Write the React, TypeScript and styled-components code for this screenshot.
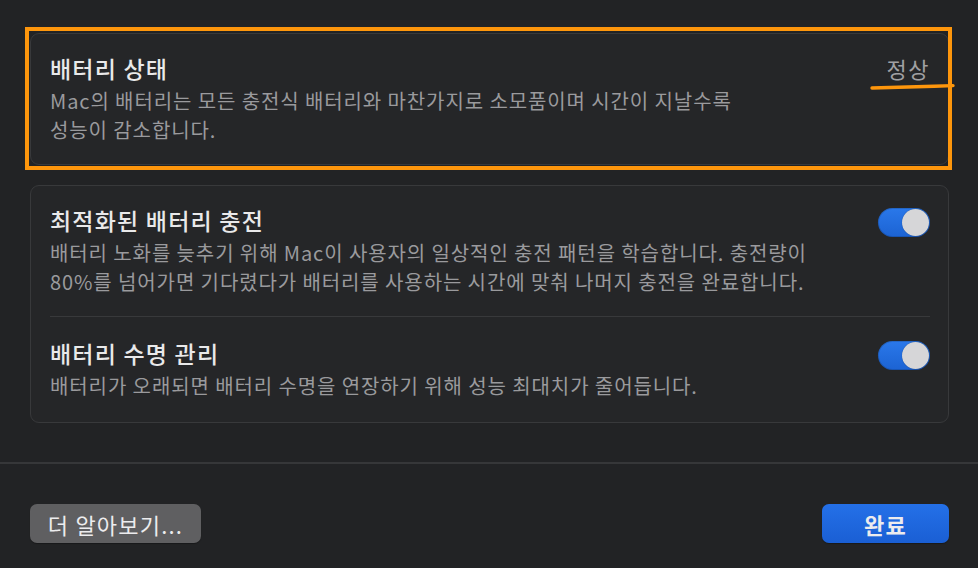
import React from "react";
import styled, { createGlobalStyle } from "styled-components";

const GlobalStyle = createGlobalStyle`
  html, body {
    margin: 0;
    padding: 0;
    background: #222325;
  }
  body {
    font-family: "Noto Sans CJK KR", "Noto Sans", sans-serif;
    -webkit-font-smoothing: antialiased;
  }
`;

const Page = styled.div`
  width: 978px;
  height: 568px;
  display: flex;
  flex-direction: column;
  box-sizing: border-box;
  padding-top: 33px;
  background: #222325;
  overflow: hidden;
`;

const Content = styled.div`
  display: flex;
  flex-direction: column;
  gap: 20px;
  padding: 0 29px 0 30px;
`;

const Annotated = styled.div`
  position: relative;
`;

const Frame = styled.div`
  position: absolute;
  left: -5px;
  top: -6px;
  right: -3px;
  bottom: -5px;
  border: 4px solid #fe960c;
  pointer-events: none;
`;

const Scribble = styled.svg`
  position: absolute;
  left: 840px;
  top: 48px;
  overflow: visible;
  pointer-events: none;
`;

const Card = styled.section`
  background: #252628;
  border: 1px solid #38393b;
  border-radius: 9px;
  padding: 0 18px 0 19px;
`;

const Row = styled.div<{ $divided?: boolean }>`
  display: flex;
  justify-content: space-between;
  align-items: flex-start;
  padding: ${(p) => (p.$divided ? "20px 0 21px" : "18px 0 20px")};
  border-top: ${(p) => (p.$divided ? "1px solid #38393b" : "none")};
`;

const Texts = styled.div`
  display: flex;
  flex-direction: column;
`;

const Title = styled.div`
  font-size: 23px;
  font-weight: 500;
  line-height: 32px;
  color: #e9e9ea;
  letter-spacing: 1.2px;
`;

const Desc = styled.div`
  margin-top: 3px;
  font-size: 20px;
  line-height: 28.5px;
  color: #9a9a9d;
  letter-spacing: 0.9px;
  white-space: nowrap;
`;

const Status = styled.div`
  font-size: 22px;
  line-height: 32px;
  color: #a0a0a3;
  letter-spacing: 1.5px;
`;

const Track = styled.div`
  width: 52px;
  height: 29px;
  margin-top: 4px;
  border-radius: 15px;
  background: linear-gradient(#2a78ea, #1c63d3);
  box-shadow: inset 0 0 0 1px rgba(0, 0, 0, 0.15);
  display: flex;
  align-items: center;
  justify-content: flex-end;
  padding: 1px;
  box-sizing: border-box;
`;

const Knob = styled.div`
  width: 27px;
  height: 27px;
  border-radius: 50%;
  background: #d6d6d8;
  box-shadow: 0 0 1px rgba(0, 0, 0, 0.4);
`;

const Footer = styled.footer`
  margin-top: auto;
  border-top: 2px solid #363739;
  display: flex;
  justify-content: space-between;
  align-items: center;
  padding: 40px 29px 25px 30px;
`;

const Button = styled.button<{ $primary?: boolean }>`
  height: 39px;
  min-width: ${(p) => (p.$primary ? "127px" : "171px")};
  border: none;
  border-radius: 7px;
  font-family: inherit;
  font-size: 22px;
  font-weight: ${(p) => (p.$primary ? 600 : 400)};
  letter-spacing: 1.2px;
  color: #ececee;
  padding: 0 10px;
  background: ${(p) =>
    p.$primary ? "linear-gradient(#2470e8, #1a5fd4)" : "#5f5f61"};
  box-shadow: 0 1px 1px rgba(0, 0, 0, 0.3);
`;

function Toggle() {
  return (
    <Track>
      <Knob />
    </Track>
  );
}

export default function App() {
  return (
    <>
      <GlobalStyle />
      <Page>
        <Content>
          <Annotated>
            <Card>
              <Row>
                <Texts>
                  <Title>배터리 상태</Title>
                  <Desc>
                    Mac의 배터리는 모든 충전식 배터리와 마찬가지로 소모품이며 시간이 지날수록
                    <br />
                    성능이 감소합니다.
                  </Desc>
                </Texts>
                <Status>정상</Status>
              </Row>
            </Card>
            <Frame />
            <Scribble width="90" height="20" viewBox="0 0 90 20">
              <path
                d="M2 7 C 25 6.2, 55 5.6, 83 4.6"
                stroke="#fe960c"
                strokeWidth="3.4"
                fill="none"
                strokeLinecap="round"
              />
            </Scribble>
          </Annotated>

          <Card>
            <Row>
              <Texts>
                <Title>최적화된 배터리 충전</Title>
                <Desc>
                  배터리 노화를 늦추기 위해 Mac이 사용자의 일상적인 충전 패턴을 학습합니다. 충전량이
                  <br />
                  80%를 넘어가면 기다렸다가 배터리를 사용하는 시간에 맞춰 나머지 충전을 완료합니다.
                </Desc>
              </Texts>
              <Toggle />
            </Row>
            <Row $divided>
              <Texts>
                <Title>배터리 수명 관리</Title>
                <Desc>배터리가 오래되면 배터리 수명을 연장하기 위해 성능 최대치가 줄어듭니다.</Desc>
              </Texts>
              <Toggle />
            </Row>
          </Card>
        </Content>

        <Footer>
          <Button>더 알아보기...</Button>
          <Button $primary>완료</Button>
        </Footer>
      </Page>
    </>
  );
}
